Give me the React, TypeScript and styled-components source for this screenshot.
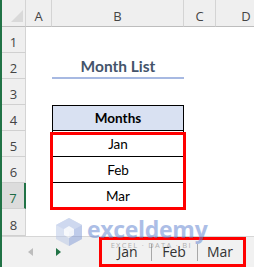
import React from "react";
import styled, { createGlobalStyle } from "styled-components";

const Global = createGlobalStyle`
  html, body { margin: 0; padding: 0; background: #ffffff; }
  * { box-sizing: border-box; }
`;

const Sheet = styled.div`
  position: relative;
  width: 254px;
  height: 267px;
  overflow: hidden;
  border-left: 2px solid #217346;
  background: #ffffff;
  display: flex;
  flex-direction: column;
`;

const Grid = styled.div`
  display: grid;
  grid-template-columns: 24px 26px 132px 32px 61px;
  grid-template-rows: 27px repeat(7, 26px) 27px;
  flex: none;
`;

const Corner = styled.div`
  position: relative;
  background: #efefef;
  border-right: 1px solid #d4d4d4;
  border-bottom: 1px solid #bdbdbd;
  &::after {
    content: "";
    position: absolute;
    left: 9px;
    top: 10px;
    width: 12px;
    height: 12px;
    background: #d9d9d9;
    clip-path: polygon(100% 0, 100% 100%, 0 100%);
  }
`;

const ColHead = styled.div`
  background: #efefef;
  border-right: 1px solid #d4d4d4;
  border-bottom: 1px solid #bdbdbd;
  font-family: "Open Sans", "Noto Sans", sans-serif;
  font-size: 13px;
  line-height: 16px;
  color: #444444;
  text-align: center;
  padding-top: 8px;
`;

const RowHead = styled.div<{ $selected?: boolean }>`
  background: ${(p) => (p.$selected ? "#dcdcdc" : "#efefef")};
  border-bottom: 1px solid #d0d0d0;
  border-right: ${(p) => (p.$selected ? "2px solid #217346" : "1px solid #d4d4d4")};
  font-family: "Open Sans", "Noto Sans", sans-serif;
  font-size: 13px;
  line-height: 16px;
  color: ${(p) => (p.$selected ? "#1d6b45" : "#444444")};
  display: flex;
  align-items: flex-end;
  justify-content: center;
  padding-bottom: 2px;
`;

const Cell = styled.div`
  background: #ffffff;
`;

const TitleCell = styled.div`
  border-bottom: 2px solid #a7b9e2;
  font-family: Lato, "Open Sans", sans-serif;
  font-weight: 700;
  font-size: 15.5px;
  line-height: 26px;
  color: #44546a;
  text-align: center;
`;

const HeadCell = styled.div`
  background: #d9e1f2;
  border: 1px solid #000000;
  font-family: Lato, "Open Sans", sans-serif;
  font-weight: 700;
  font-size: 13.5px;
  line-height: 24px;
  color: #000000;
  text-align: center;
`;

const DataCell = styled.div`
  border-left: 1px solid #000000;
  border-right: 1px solid #000000;
  border-bottom: 1px solid #000000;
  font-family: Lato, "Open Sans", sans-serif;
  font-size: 13.5px;
  line-height: 26px;
  color: #000000;
  text-align: center;
`;

const Highlight = styled.div`
  position: absolute;
  left: 48px;
  top: 132px;
  width: 136px;
  height: 78px;
  border: 3px solid #ff0000;
  pointer-events: none;
`;

const TabBar = styled.div`
  flex: 1;
  display: flex;
  align-items: flex-start;
  background: #f1f1f1;
  border-top: 1px solid #d6d6d6;
`;

const Nav = styled.div`
  width: 97px;
  height: 30px;
  display: flex;
  align-items: center;
  padding-left: 26px;
  gap: 23px;
`;

const Arrow = styled.svg`
  display: block;
`;

const TabGroup = styled.div`
  display: flex;
  height: 30px;
  padding-left: 2px;
  border: 3px solid #ff0000;
`;

const Tab = styled.div<{ $w: number; $sep?: boolean }>`
  position: relative;
  width: ${(p) => p.$w}px;
  font-family: "Open Sans", "Noto Sans", sans-serif;
  font-size: 14px;
  line-height: 23px;
  color: #333333;
  text-align: center;
  &::before {
    content: "";
    display: ${(p) => (p.$sep ? "block" : "none")};
    position: absolute;
    left: 0;
    top: 4px;
    bottom: 3px;
    width: 1px;
    background: #a8a8a8;
  }
`;

const Watermark = styled.div`
  position: absolute;
  left: 53px;
  top: 217px;
  display: flex;
  align-items: flex-start;
  gap: 4px;
  opacity: 0.5;
  pointer-events: none;
`;

const WmText = styled.div`
  display: flex;
  flex-direction: column;
  align-items: center;
`;

const WmBrand = styled.div`
  font-family: "Open Sans", "Noto Sans", sans-serif;
  font-weight: 700;
  font-size: 23px;
  line-height: 24px;
  letter-spacing: -0.3px;
  color: #5b7fcf;
`;

const WmTag = styled.div`
  font-family: "Open Sans", "Noto Sans", sans-serif;
  font-size: 7.5px;
  line-height: 9px;
  letter-spacing: 1.3px;
  color: #6e6e6e;
  padding-left: 8px;
`;

const rows = [1, 2, 3, 4, 5, 6, 7, 8];

function renderB(r: number) {
  if (r === 2) return <TitleCell>Month List</TitleCell>;
  if (r === 4) return <HeadCell>Months</HeadCell>;
  if (r === 5) return <DataCell>Jan</DataCell>;
  if (r === 6) return <DataCell>Feb</DataCell>;
  if (r === 7) return <DataCell>Mar</DataCell>;
  return <Cell />;
}

export default function App() {
  return (
    <>
      <Global />
      <Sheet>
        <Grid>
          <Corner />
          <ColHead>A</ColHead>
          <ColHead>B</ColHead>
          <ColHead>C</ColHead>
          <ColHead>D</ColHead>
          {rows.map((r) => (
            <React.Fragment key={r}>
              <RowHead $selected={r === 7}>{r}</RowHead>
              <Cell />
              {renderB(r)}
              <Cell />
              <Cell />
            </React.Fragment>
          ))}
        </Grid>
        <TabBar>
          <Nav>
            <Arrow width="5" height="8" viewBox="0 0 5 8">
              <path d="M5 0 L0 4 L5 8 Z" fill="#bdbdbd" />
            </Arrow>
            <Arrow width="5" height="8" viewBox="0 0 5 8">
              <path d="M0 0 L5 4 L0 8 Z" fill="#217346" />
            </Arrow>
          </Nav>
          <TabGroup>
            <Tab $w={47}>Jan</Tab>
            <Tab $w={46} $sep>Feb</Tab>
            <Tab $w={46} $sep>Mar</Tab>
          </TabGroup>
        </TabBar>
        <Highlight />
        <Watermark>
          <svg width="28" height="30" viewBox="0 0 28 30">
            <path d="M14 1 L27 8 L27 22 L14 29 L1 22 L1 8 Z" fill="#b7c6e6" />
            <path d="M14 1 L27 8 L14 15 L1 8 Z" fill="#9fb3e0" />
            <path d="M14 15 L27 8 L27 22 L14 29 Z" fill="#7f98d6" />
            <path d="M9 12 L14 9 L19 12 L19 18 L14 21 L9 18 Z" fill="#ffffff" opacity="0.8" />
          </svg>
          <WmText>
            <WmBrand>exceldemy</WmBrand>
            <WmTag>EXCEL · DATA · BI</WmTag>
          </WmText>
        </Watermark>
      </Sheet>
    </>
  );
}
